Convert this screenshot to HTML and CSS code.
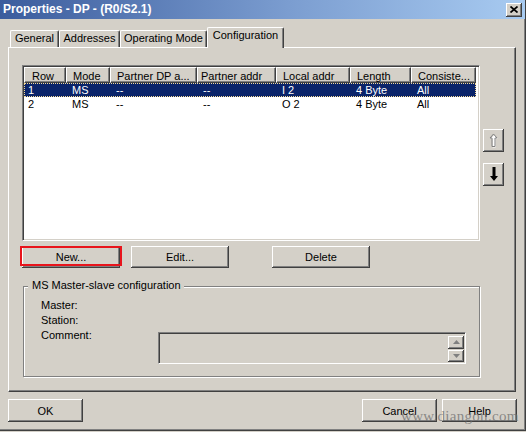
FILE: index.html
```html
<!DOCTYPE html>
<html>
<head>
<meta charset="utf-8">
<title>Properties - DP - (R0/S2.1)</title>
<link rel="stylesheet" href="styles.css">
</head>
<body>
<div class="window">
  <div class="titlebar">
    <span class="title">Properties - DP - (R0/S2.1)</span>
    <div class="close">
      <svg width="8" height="7" viewBox="0 0 8 7"><path d="M0.5 0.5L7.5 6.5M7.5 0.5L0.5 6.5" stroke="#000" stroke-width="1.7" fill="none"/></svg>
    </div>
  </div>

  <div class="tabstrip">
    <div class="tab tab-general">General</div>
    <div class="tab tab-addresses">Addresses</div>
    <div class="tab tab-opmode">Operating Mode</div>
    <div class="tab tab-active tab-config">Configuration</div>
  </div>

  <div class="panel">
    <div class="list-area">
      <div class="listview">
        <div class="lv-header">
          <div class="hcell c-row">Row</div>
          <div class="hcell">Mode</div>
          <div class="hcell">Partner DP a...</div>
          <div class="hcell hc-paddr">Partner addr</div>
          <div class="hcell">Local addr</div>
          <div class="hcell">Length</div>
          <div class="hcell">Consiste...</div>
        </div>
        <div class="lv-row selected">
          <div class="cell c-row">1</div>
          <div class="cell">MS</div>
          <div class="cell">--</div>
          <div class="cell">--</div>
          <div class="cell">I 2</div>
          <div class="cell">4 Byte</div>
          <div class="cell">All</div>
        </div>
        <div class="lv-row">
          <div class="cell c-row">2</div>
          <div class="cell">MS</div>
          <div class="cell">--</div>
          <div class="cell">--</div>
          <div class="cell">O 2</div>
          <div class="cell">4 Byte</div>
          <div class="cell">All</div>
        </div>
      </div>
      <div class="side-buttons">
        <div class="btn sq btn-up">
          <svg width="9" height="15" viewBox="0 0 9 15">
            <path d="M4.5 1.5L8 5.5H6V14H3V5.5H1Z" fill="#fff" transform="translate(0.6,0.6)"/>
            <path d="M4.5 1L8 5H6V13.5H3V5H1Z" fill="none" stroke="#808080" stroke-width="1"/>
          </svg>
        </div>
        <div class="btn sq btn-down">
          <svg width="8" height="15" viewBox="0 0 8 15">
            <path d="M2.5 0H5.5V9H8L4 14L0 9H2.5Z" fill="#000"/>
          </svg>
        </div>
      </div>
    </div>

    <div class="actions">
      <div class="btn act act-new">New...</div>
      <div class="btn act act-edit">Edit...</div>
      <div class="btn act act-delete">Delete</div>
    </div>

    <div class="group">
      <span class="group-title">MS Master-slave configuration</span>
      <div class="field field-first">Master:</div>
      <div class="field">Station:</div>
      <div class="field comment-row">
        <span class="lbl">Comment:</span>
        <div class="comment-box">
          <div class="spin">
            <div class="spin-btn"><svg width="7" height="4" viewBox="0 0 7 4"><path d="M3.5 0L7 4H0Z" fill="#808080"/></svg></div>
            <div class="spin-btn"><svg width="7" height="4" viewBox="0 0 7 4"><path d="M0 0H7L3.5 4Z" fill="#808080"/></svg></div>
          </div>
        </div>
      </div>
    </div>
  </div>

  <div class="footer">
    <div class="btn foot">OK</div>
    <div class="spacer"></div>
    <div class="btn foot">Cancel</div>
    <div class="btn foot foot-help">Help</div>
  </div>

  <div class="watermark">www.diangon.com</div>
</div>
</body>
</html>
```
FILE: styles.css
```css
* { box-sizing: border-box; }

html, body {
  margin: 0;
  padding: 0;
}

body {
  width: 526px;
  height: 432px;
  background: #d4d0c8;
  font-family: "Liberation Sans", Arial, sans-serif;
  font-size: 11px;
  color: #000;
  overflow: hidden;
}

.window {
  position: relative;
  width: 526px;
  height: 431px;
  display: flex;
  flex-direction: column;
  border-right: 1px solid #404040;
  border-bottom: 1px solid #404040;
  box-shadow: inset -1px -1px 0 #808080;
}

/* Title bar */
.titlebar {
  flex: none;
  height: 19px;
  display: flex;
  align-items: center;
  justify-content: space-between;
  padding: 0 3px 0 3px;
  background: linear-gradient(to right, #3b5c9d 0%, #7b9dd0 55%, #a8cbf1 100%);
}

.title {
  color: #fff;
  font-weight: bold;
  font-size: 12px;
  line-height: 19px;
}

.close {
  width: 16px;
  height: 14px;
  display: flex;
  align-items: center;
  justify-content: center;
  background: #d4d0c8;
  box-shadow: inset -1px -1px 0 #404040, inset 1px 1px 0 #fff, inset -2px -2px 0 #808080;
}

/* Tabs */
.tabstrip {
  flex: none;
  height: 28px;
  display: flex;
  align-items: flex-end;
  padding-left: 10px;
}

.tab {
  height: 17px;
  line-height: 13px;
  text-align: center;
  border-top: 1px solid #fff;
  border-left: 1px solid #fff;
  border-right: 1px solid #404040;
  border-top-left-radius: 2px;
  border-top-right-radius: 2px;
  box-shadow: inset -1px 0 0 #808080;
  background: #d4d0c8;
  padding-top: 1px;
}

.tab-general { width: 49px; }
.tab-addresses { width: 61px; }
.tab-opmode { width: 87px; }
.tab-config { width: 77px; }

.tab-active {
  position: relative;
  z-index: 1;
  height: 21px;
  margin-bottom: -1px;
  padding-top: 1px;
}

/* Panel */
.panel {
  flex: none;
  margin-left: 8px;
  width: 508px;
  height: 345px;
  border-top: 1px solid #fff;
  border-left: 1px solid #fff;
  border-right: 1px solid #404040;
  border-bottom: 1px solid #404040;
  box-shadow: inset -1px -1px 0 #808080;
  display: flex;
  flex-direction: column;
}

.list-area {
  display: flex;
  margin-top: 17px;
  margin-left: 13px;
}

.listview {
  width: 458px;
  height: 176px;
  background: #fff;
  border-top: 1px solid #808080;
  border-left: 1px solid #808080;
  border-right: 1px solid #fff;
  border-bottom: 1px solid #fff;
  box-shadow: inset 1px 1px 0 #404040, inset -1px -1px 0 #d4d0c8;
  padding: 1px;
}

.lv-header,
.lv-row {
  display: grid;
  grid-template-columns: 42px 44px 87px 79px 74px 61px 65px;
  width: 452px;
}

.hcell {
  height: 16px;
  line-height: 14px;
  padding: 1px 0 0 6px;
  background: #d4d0c8;
  border-top: 1px solid #fff;
  border-left: 1px solid #fff;
  border-right: 1px solid #404040;
  border-bottom: 1px solid #404040;
  box-shadow: inset -1px -1px 0 #808080;
  white-space: nowrap;
  overflow: hidden;
}

.hcell.c-row { padding-left: 7px; }
.hcell.hc-paddr { padding-left: 3px; }

.lv-row {
  height: 14px;
  line-height: 14px;
}

.cell {
  padding-left: 6px;
  white-space: nowrap;
}

.cell.c-row { padding-left: 4px; }

.lv-row.selected {
  background: #0a246a;
  color: #fff;
  outline: 1px dotted #f5db95;
  outline-offset: -1px;
}

.side-buttons {
  display: flex;
  flex-direction: column;
  margin-left: 3px;
}

.btn {
  background: #d4d0c8;
  box-shadow: inset -1px -1px 0 #404040, inset 1px 1px 0 #fff, inset -2px -2px 0 #808080;
  display: flex;
  align-items: center;
  justify-content: center;
}

.sq {
  width: 21px;
  height: 23px;
}

.btn-up { margin-top: 64px; }
.btn-down { margin-top: 11px; }

/* Action buttons */
.actions {
  display: flex;
  margin-top: 5px;
  margin-left: 13px;
}

.act {
  width: 98px;
  height: 22px;
}

.act-new {
  position: relative;
}

.act-new::after {
  content: "";
  position: absolute;
  left: -2px;
  right: -2px;
  top: 0;
  bottom: 2px;
  border: 2px solid #e8141c;
}

.act-edit { margin-left: 11px; }
.act-delete { margin-left: 43px; }

/* Group box */
.group {
  width: 457px;
  height: 91px;
  margin-top: 18px;
  margin-left: 14px;
  border: 1px solid #808080;
  box-shadow: inset 1px 1px 0 #fff, 1px 1px 0 #fff;
  display: flex;
  flex-direction: column;
  padding-left: 17px;
}

.group-title {
  align-self: flex-start;
  margin-top: -8px;
  margin-left: -13px;
  padding: 0 3px 0 4px;
  line-height: 13px;
  background: #d4d0c8;
}

.field {
  line-height: 15px;
}

.field-first { margin-top: 6px; }

.comment-row {
  display: flex;
  align-items: flex-start;
}

.lbl {
  width: 117px;
  flex: none;
}

.comment-box {
  width: 308px;
  height: 32px;
  margin-top: 4px;
  border-top: 1px solid #808080;
  border-left: 1px solid #808080;
  border-right: 1px solid #fff;
  border-bottom: 1px solid #fff;
  box-shadow: inset 1px 1px 0 #404040, inset -1px -1px 0 #d4d0c8;
  display: flex;
  justify-content: flex-end;
  padding: 2px 1px 1px 2px;
}

.spin {
  width: 16px;
  display: flex;
  flex-direction: column;
  gap: 1px;
  padding-top: 1px;
}

.spin-btn {
  height: 13px;
  display: flex;
  align-items: center;
  justify-content: center;
  background: #d4d0c8;
  box-shadow: inset -1px -1px 0 #404040, inset 1px 1px 0 #fff, inset -2px -2px 0 #808080;
}

/* Footer */
.footer {
  flex: none;
  display: flex;
  margin-top: 7px;
  padding: 0 8px 0 8px;
}

.foot {
  width: 75px;
  height: 23px;
}

.spacer { flex: 1; }

.foot-help { margin-left: 5px; }

.watermark {
  position: absolute;
  left: 401px;
  top: 409px;
  font-family: "Liberation Serif", "Times New Roman", serif;
  font-size: 15px;
  line-height: 15px;
  letter-spacing: 0.3px;
  color: rgba(110, 110, 110, 0.75);
  pointer-events: none;
}
```
